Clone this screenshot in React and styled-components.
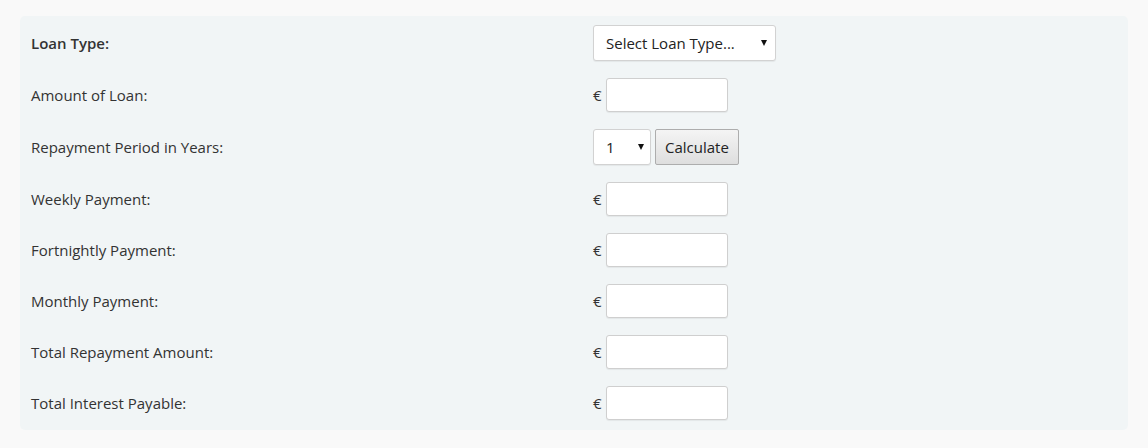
import React from "react";
import styled, { createGlobalStyle } from "styled-components";

const GlobalStyle = createGlobalStyle`
  html, body { margin: 0; padding: 0; background: #f9f9f9; }
  body { font-family: "Open Sans", "Noto Sans", Arial, sans-serif; font-size: 15px; color: #333; }
`;

const Page = styled.div`
  padding: 16px 20px 0 20px;
`;

const Panel = styled.div`
  background: #f1f5f6;
  border-radius: 5px;
  padding: 0 11px 2px 11px;
  display: flex;
  flex-direction: column;
`;

const Row = styled.div`
  display: grid;
  grid-template-columns: 562px 1fr;
  align-items: center;
  padding: 9px 0 8px 0;
`;

const Label = styled.div`
  font-weight: ${(p) => (p.$bold ? 600 : 400)};
  color: #333;
`;

const Controls = styled.div`
  display: flex;
  align-items: center;
  gap: 5px;
`;

const Euro = styled.span`
  width: 8px;
  color: #333;
`;

const TextInput = styled.input`
  box-sizing: border-box;
  width: 122px;
  height: 34px;
  border: 1px solid #cfcfcf;
  border-radius: 3px;
  background: #fff;
  box-shadow: 0 1px 1px rgba(0, 0, 0, 0.06);
  font: inherit;
  padding: 4px 8px;
  outline: none;
`;

const SelectWrap = styled.div`
  position: relative;
  display: inline-flex;
  &::after {
    content: "";
    position: absolute;
    right: ${(p) => p.$arrowRight}px;
    top: 50%;
    margin-top: -3px;
    border-left: 3.5px solid transparent;
    border-right: 3.5px solid transparent;
    border-top: 6px solid #111;
    pointer-events: none;
  }
`;

const Select = styled.select`
  appearance: none;
  -webkit-appearance: none;
  box-sizing: border-box;
  width: ${(p) => p.$w}px;
  height: 36px;
  border: 1px solid #d2d2d2;
  border-radius: 3px;
  background: #fff;
  box-shadow: 0 1px 1px rgba(0, 0, 0, 0.06);
  font: inherit;
  color: #222;
  padding: 0 12px;
  outline: none;
`;

const Button = styled.button`
  box-sizing: border-box;
  height: 36px;
  padding: 0 9px;
  border: 1px solid #adadad;
  border-radius: 2px;
  background: linear-gradient(#f4f4f4, #dedede);
  font: inherit;
  color: #222;
  margin-left: -1px;
`;

const outputs = [
  "Weekly Payment:",
  "Fortnightly Payment:",
  "Monthly Payment:",
  "Total Repayment Amount:",
  "Total Interest Payable:",
];

export default function App() {
  return (
    <>
      <GlobalStyle />
      <Page>
        <Panel>
          <Row>
            <Label $bold>Loan Type:</Label>
            <Controls>
              <SelectWrap $arrowRight={9}>
                <Select $w={183} defaultValue="">
                  <option value="">Select Loan Type...</option>
                  <option value="car">Car Loan</option>
                  <option value="home">Home Improvement Loan</option>
                </Select>
              </SelectWrap>
            </Controls>
          </Row>
          <Row>
            <Label>Amount of Loan:</Label>
            <Controls>
              <Euro>€</Euro>
              <TextInput type="text" />
            </Controls>
          </Row>
          <Row>
            <Label>Repayment Period in Years:</Label>
            <Controls>
              <SelectWrap $arrowRight={7}>
                <Select $w={58} defaultValue="1">
                  {[1, 2, 3, 4, 5, 6, 7, 8, 9, 10].map((n) => (
                    <option key={n} value={n}>
                      {n}
                    </option>
                  ))}
                </Select>
              </SelectWrap>
              <Button type="button">Calculate</Button>
            </Controls>
          </Row>
          {outputs.map((l) => (
            <Row key={l}>
              <Label>{l}</Label>
              <Controls>
                <Euro>€</Euro>
                <TextInput type="text" readOnly />
              </Controls>
            </Row>
          ))}
        </Panel>
      </Page>
    </>
  );
}
